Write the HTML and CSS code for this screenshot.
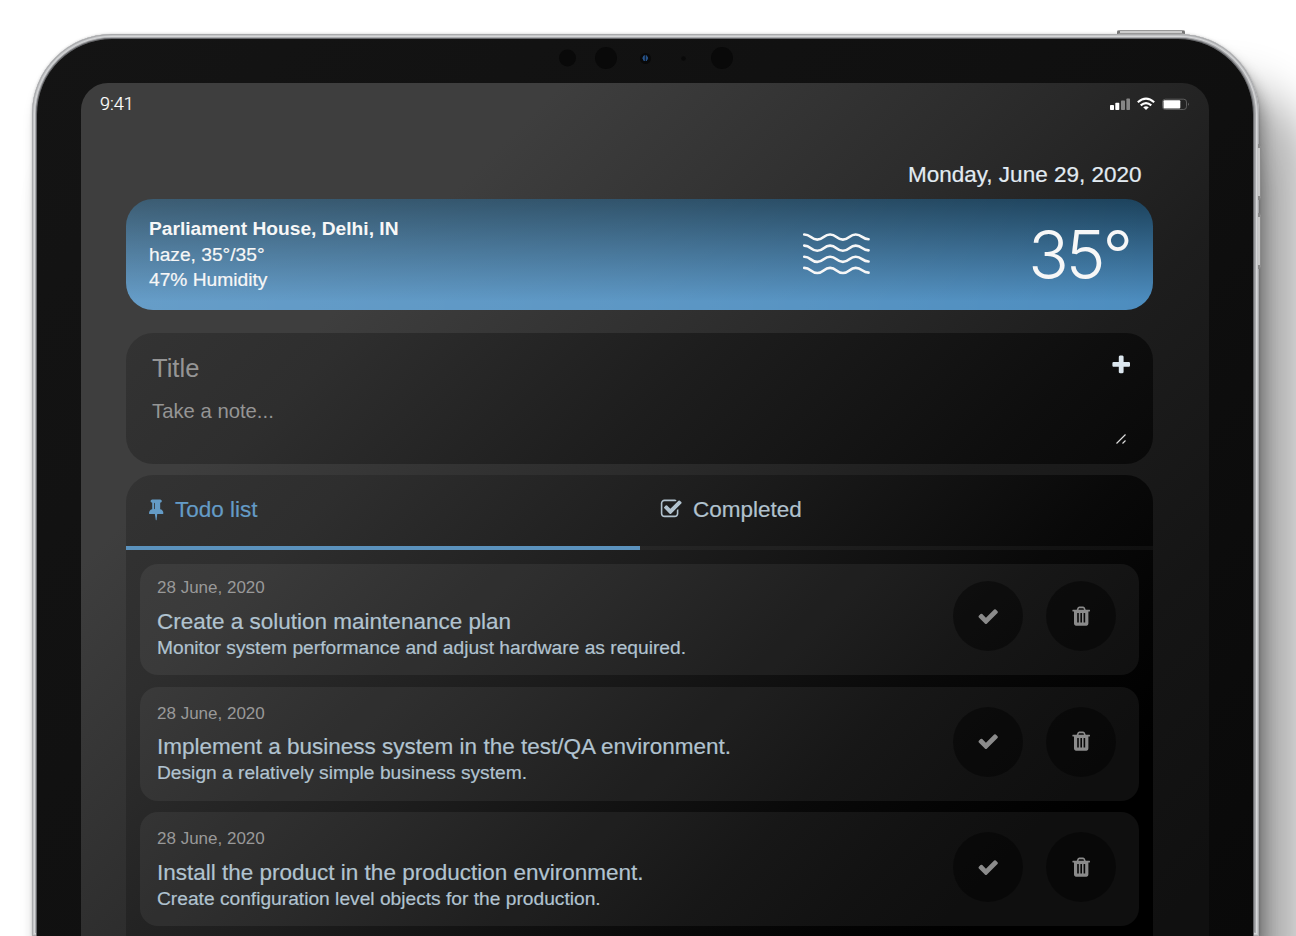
FILE: index.html
```html
<!DOCTYPE html>
<html lang="en">
<head>
<meta charset="utf-8">
<title>Todo list</title>
<link rel="stylesheet" href="styles.css">
</head>
<body>
<svg class="defs" aria-hidden="true">
  <symbol id="plus" viewBox="0 0 1792 1792"><path d="M1600 736v192q0 40-28 68t-68 28h-416v416q0 40-28 68t-68 28h-192q-40 0-68-28t-28-68v-416h-416q-40 0-68-28t-28-68v-192q0-40 28-68t68-28h416v-416q0-40 28-68t68-28h192q40 0 68 28t28 68v416h416q40 0 68 28t28 68z"/></symbol>
  <symbol id="check" viewBox="0 0 1792 1792"><path d="M1671 566q0 40-28 68l-724 724-136 136q-28 28-68 28t-68-28l-136-136-362-362q-28-28-28-68t28-68l136-136q28-28 68-28t68 28l294 295 656-657q28-28 68-28t68 28l136 136q28 28 28 68z"/></symbol>
  <symbol id="trash" viewBox="0 0 1792 1792"><path d="M704 1376v-704q0-14-9-23t-23-9h-64q-14 0-23 9t-9 23v704q0 14 9 23t23 9h64q14 0 23-9t9-23zm256 0v-704q0-14-9-23t-23-9h-64q-14 0-23 9t-9 23v704q0 14 9 23t23 9h64q14 0 23-9t9-23zm256 0v-704q0-14-9-23t-23-9h-64q-14 0-23 9t-9 23v704q0 14 9 23t23 9h64q14 0 23-9t9-23zm-544-992h448l-48-117q-7-9-17-11h-317q-10 2-17 11zm928 32v64q0 14-9 23t-23 9h-96v948q0 83-47 143.500t-113 60.500h-832q-66 0-113-58.500t-47-141.500v-952h-96q-14 0-23-9t-9-23v-64q0-14 9-23t23-9h309l70-167q15-37 54-63t79-26h320q40 0 79 26t54 63l70 167h309q14 0 23 9t9 23z"/></symbol>
  <symbol id="pin" viewBox="0 0 1792 1792"><path d="M800 864v-448q0-14-9-23t-23-9-23 9-9 23v448q0 14 9 23t23 9 23-9 9-23zm672 352q0 26-19 45t-45 19h-429l-51 483q-2 12-10.500 20.500t-20.500 8.500h-1q-27 0-32-27l-76-485h-404q-26 0-45-19t-19-45q0-123 78.500-221.500t177.500-98.500v-512q-52 0-90-38t-38-90 38-90 90-38h640q52 0 90 38t38 90-38 90-90 38v512q99 0 177.500 98.500t78.500 221.500z"/></symbol>
  <symbol id="done" viewBox="0 0 1792 1792"><path d="M1472 930v318q0 119-84.500 203.500t-203.500 84.500h-832q-119 0-203.500-84.500t-84.500-203.500v-832q0-119 84.500-203.500t203.500-84.500h832q63 0 117 25 15 7 18 23 3 17-9 29l-49 49q-10 10-23 10-3 0-9-2-23-6-45-6h-832q-66 0-113 47t-47 113v832q0 66 47 113t113 47h832q66 0 113-47t47-113v-254q0-13 9-22l64-64q10-10 23-10 6 0 12 3 20 8 20 29zm231-489l-814 814q-24 24-57 24t-57-24l-430-430q-24-24-24-57t24-57l110-110q24-24 57-24t57 24l263 263 647-647q24-24 57-24t57 24l110 110q24 24 24 57t-24 57z"/></symbol>
</svg>
<div class="device">
  <span class="power"></span>
  <span class="volume volume-up"></span>
  <span class="volume volume-down"></span>
  <div class="bezel">
    <svg class="sensors" width="180" height="24" viewBox="0 0 180 24">
      <g fill="#090909"><circle cx="12.500" cy="12" r="8.500"/><circle cx="51" cy="12" r="11"/><circle cx="90.500" cy="12.500" r="5.500"/><circle cx="128.500" cy="12.500" r="2.300"/><circle cx="167" cy="12" r="11"/></g>
      <path d="M89.300 9.500q-3 2.500 0 5.400zM91.200 9.500q3 2.500 0 5.400z" fill="#28568f" stroke="#28568f" stroke-width=".9"/>
    </svg>
    <main class="screen">
      <header class="status">
        <span class="clock">9:41</span>
        <svg width="80" height="14" viewBox="0 0 80 14">
          <g fill="#fff"><rect x="0" y="8" width="4" height="5" rx=".7"/><rect x="5.300" y="5.700" width="4" height="7.300" rx=".7"/></g>
          <g fill="#858585"><rect x="11" y="3.500" width="4" height="9.500" rx=".7"/><rect x="16.400" y="1.500" width="3.600" height="11.500" rx=".7"/></g>
          <g fill="none" stroke="#fff" stroke-width="2.100"><path d="M27.800 5.300q8.200-7.200 16.400 0"/><path d="M30.700 8.400q5.300-4.600 10.600 0"/></g>
          <path d="M33.200 10.300q2.800-2 5.600 0L36 13z" fill="#fff"/>
          <rect x="52.500" y="2.200" width="24" height="10.300" rx="2.800" fill="none" stroke="#6a6a6a" stroke-width=".8"/>
          <rect x="53.500" y="3.200" width="16.800" height="8.300" rx="1" fill="#fff"/>
          <path d="M78 5.500q1.600 1.800 0 3.600z" fill="#777"/>
        </svg>
      </header>
      <div class="content">
        <div class="today">Monday, June 29, 2020</div>
        <section class="weather">
          <div class="place"><strong>Parliament House, Delhi, IN</strong><span>haze, 35°/35°</span><span>47% Humidity</span></div>
          <svg class="haze" width="69" height="46" viewBox="0 0 70 46" fill="none" stroke="#f7f7f7" stroke-width="2.700" stroke-linecap="round">
            <path d="M2.300 3.200C9 3.200 9 8.400 15.500 8.400S22 3.200 28.500 3.200 35 8.400 41.500 8.400 48 3.200 54.500 3.200 61 8 67.500 8"/>
            <path d="M2.300 14.500C9 14.500 9 19.700 15.500 19.700S22 14.500 28.500 14.500 35 19.700 41.500 19.700 48 14.500 54.500 14.500 61 19.300 67.500 19.300"/>
            <path d="M2.300 25.800C9 25.800 9 31 15.500 31S22 25.800 28.500 25.800 35 31 41.500 31 48 25.800 54.500 25.800 61 30.600 67.500 30.600"/>
            <path d="M2.300 37.100C9 37.100 9 42.300 15.500 42.300S22 37.100 28.500 37.100 35 42.300 41.500 42.300 48 37.100 54.500 37.100 61 41.900 67.500 41.900"/>
          </svg>
          <div class="temp">35°</div>
        </section>
        <section class="note">
          <div class="fields"><div class="note-title">Title</div><div class="note-body">Take a note...</div></div>
          <div class="tools">
            <svg class="icon"><use href="#plus"/></svg>
            <svg class="grip" width="12" height="12" viewBox="0 0 12 12" stroke="#ddd" stroke-width="1.200"><path d="M1.500 10.500l9-9M7.500 10.500l3-3"/></svg>
          </div>
        </section>
        <section class="panel">
          <nav class="tabs">
            <div class="tab active"><svg class="icon"><use href="#pin"/></svg><span>Todo list</span></div>
            <div class="tab"><svg class="icon"><use href="#done"/></svg><span>Completed</span></div>
          </nav>
          <div class="list">
            <article class="item">
              <div class="text"><time>28 June, 2020</time><h2>Create a solution maintenance plan</h2><p>Monitor system performance and adjust hardware as required.</p></div>
              <div class="actions"><span class="round"><svg class="icon"><use href="#check"/></svg></span><span class="round"><svg class="icon"><use href="#trash"/></svg></span></div>
            </article>
            <article class="item">
              <div class="text"><time>28 June, 2020</time><h2>Implement a business system in the test/QA environment.</h2><p>Design a relatively simple business system.</p></div>
              <div class="actions"><span class="round"><svg class="icon"><use href="#check"/></svg></span><span class="round"><svg class="icon"><use href="#trash"/></svg></span></div>
            </article>
            <article class="item">
              <div class="text"><time>28 June, 2020</time><h2>Install the product in the production environment.</h2><p>Create configuration level objects for the production.</p></div>
              <div class="actions"><span class="round"><svg class="icon"><use href="#check"/></svg></span><span class="round"><svg class="icon"><use href="#trash"/></svg></span></div>
            </article>
          </div>
        </section>
      </div>
    </main>
  </div>
</div>
</body>
</html>
```
FILE: styles.css
```css
* { box-sizing: border-box; }
html, body { margin: 0; height: 936px; overflow: hidden; background: #fff; }
body { font-family: "Liberation Sans", Arial, sans-serif; padding: 34px 0 0 32px; }
.defs { position: absolute; width: 0; height: 0; }
.icon { display: block; width: 22.4px; height: 22.4px; fill: currentColor; flex: none; }

.device {
  position: relative; width: 1227px; height: 902px; padding: 5px 6px 0 5px; border-radius: 80px 80px 0 0;
  background: #97989b;
  box-shadow: inset 0 0 0 1px #a9aaac, inset 0 0 0 2px #c4c5c7, inset 0 0 0 3px #d6d7d8, inset 0 0 0 4px #aaabae,
    0 0 3px rgba(0,0,0,.22), 5px 12px 14px rgba(0,0,0,.28), 10px 90px 24px rgba(0,0,0,.12), 48px 52px 46px rgba(0,0,0,.3);
}
.bezel {
  position: relative; height: 100%; padding: 44px 44px 0; border-radius: 75px 75px 0 0;
  background: linear-gradient(135deg, #141414, #0f0f0f 60%, #090909);
  box-shadow: 0 0 0 1px #66676a;
}
.power { position: absolute; left: 1085px; top: -4px; width: 68px; height: 4px; border: 1px solid #999; border-left: 3px solid #777; border-right: 3px solid #777; border-radius: 2px 2px 0 0; background: #ccc; }
.volume { position: absolute; left: 1226px; width: 3px; height: 56px; border: 1px solid #8b8b8b; border-top: 4px solid #888; border-bottom: 4px solid #888; border-left: 0; border-radius: 0 2px 2px 0; background: #c9c9c9; }
.volume-up { top: 110px; }
.volume-down { top: 179px; }
.sensors { position: absolute; left: 518px; top: 7px; }

.screen {
  height: 100%; border-radius: 27px 27px 0 0;
  background: linear-gradient(135deg, #3e3e3e 0, #3e3e3e 340px, #2c2c2c 655px, #1d1d1d 900px, #151515 1130px, #101010 1360px);
}
.status { display: flex; justify-content: space-between; align-items: center; height: 41px; padding: 0 19px; color: #fff; }
.clock { font: 300 18px/22px Roboto, sans-serif; -webkit-text-stroke: .2px #fff; }
.content { padding: 37.5px 56px 0 45px; }
.today { padding-right: 11.5px; text-align: right; font-size: 22.5px; line-height: 26px; color: #e2ebf2; -webkit-text-stroke: .2px #e2ebf2; }

.weather {
  display: flex; height: 111px; margin-top: 11.5px; padding: 17.4px 24px 0 23px; border-radius: 27px; color: #f7f7f7;
  background: linear-gradient(90deg, rgba(255,255,255,.14), rgba(255,255,255,.09) 50%, rgba(255,255,255,0)),
    linear-gradient(#1c425c, #4d8dbf 92%, #4d8dbf);
}
.place { display: flex; flex-direction: column; width: 653px; font-size: 19.2px; line-height: 25.4px; white-space: nowrap; }
.place span { -webkit-text-stroke: .2px #f7f7f7; }
.haze { margin-top: 14.5px; }
.temp { margin-left: auto; font: 300 67px/78px Inter, "Liberation Sans", sans-serif; letter-spacing: -3px; margin-right: -1px; }

.note {
  display: flex; justify-content: space-between; height: 131px; margin-top: 23px; padding: 19.6px 20.4px 0 26px; border-radius: 27px;
  background: linear-gradient(135deg, #333 0, #2e2e2e 160px, #1d1d1d 424px, #0e0e0e 700px, #090909 820px);
  color: #959595;
}
.note-title { font-size: 25.6px; line-height: 30px; }
.note-body { margin-top: 16px; font-size: 20.3px; line-height: 24px; }
.tools { display: flex; flex-direction: column; align-items: center; color: #dbe6ee; }
.tools .icon { margin-top: 1.7px; }
.grip { margin-top: 56px; }

.panel {
  height: 461px; margin-top: 11px; border-radius: 27px 27px 0 0;
  background: linear-gradient(135deg, #333 0, #2e2e2e 160px, #1d1d1d 424px, #090909 707px, #040404 813px, #000 920px);
}
.tabs { display: grid; grid-template-columns: 1fr 1fr; }
.tab { display: flex; height: 75px; padding: 21.8px 0 0 19px; border-bottom: 4px solid rgba(255,255,255,.045); color: #b1c2ce; font-size: 22.5px; line-height: 26px; }
.tab span { margin-left: 7.5px; -webkit-text-stroke: .2px currentColor; }
.tab .icon { margin-top: 1.5px; }
.tab:not(.active) { padding-left: 20.5px; }
.tab:not(.active) span { margin-left: 10.5px; }
.active { color: #649bc6; border-color: #5b92bd; }

.list { display: flex; flex-direction: column; gap: 11.5px; padding: 14px 14px 0; }
.item { display: flex; justify-content: space-between; height: 114px; padding: 17px 23px 0 17px; border-radius: 18px; background: rgba(255,255,255,.06); color: #b1c3d0; }
.item:first-child { height: 111.200px; padding-top: 14.200px; }
.text { display: flex; flex-direction: column; }
time { color: #999; font-size: 17px; line-height: 20px; }
h2 { margin: 10.500px 0 2px; font-size: 22.5px; line-height: 26px; font-weight: 400; -webkit-text-stroke: .2px currentColor; }
p { margin: 0; font-size: 19.2px; line-height: 22px; -webkit-text-stroke: .2px currentColor; }
.actions { display: flex; gap: 23px; padding-top: 2.900px; }
.round { display: flex; align-items: center; justify-content: center; width: 70px; height: 70px; border-radius: 50%; background: rgba(0,0,0,.43); color: #8b8b8b; }
```
